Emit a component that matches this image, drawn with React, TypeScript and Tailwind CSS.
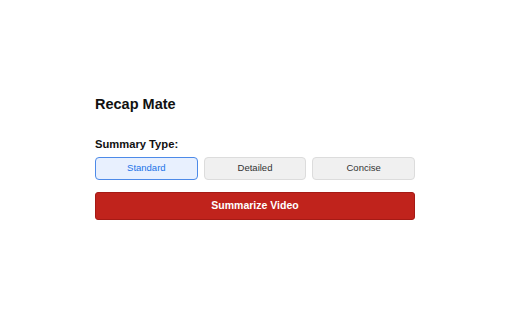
export default function App() {
  const types = ["Standard", "Detailed", "Concise"];
  const active = "Standard";

  return (
    <div className="min-h-[320px] w-[512px] bg-white font-['Liberation_Sans',Arial,sans-serif]">
      <div className="ml-[95px] w-[320px] pt-[95px]">
        <h1 className="text-[14.5px] leading-[18px] font-bold text-[#111]">Recap Mate</h1>

        <div className="mt-[24px] text-[11.2px] leading-[14px] font-bold text-[#111]">Summary Type:</div>

        <div className="mt-[6px] grid grid-cols-3 gap-[6px]">
          {types.map((t) =>
            t === active ? (
              <button
                key={t}
                className="h-[23px] rounded-[4px] border border-[#4d8ae8] bg-[#e8f0fe] text-[9.5px] text-[#1a73e8]"
              >
                {t}
              </button>
            ) : (
              <button
                key={t}
                className="h-[23px] rounded-[4px] border border-[#dcdcdc] bg-[#f0f0f0] text-[9.5px] text-[#333]"
              >
                {t}
              </button>
            )
          )}
        </div>

        <button className="mt-[12px] h-[28px] w-full rounded-[3px] border border-[#a51a15] bg-[#c0231c] text-[10.5px] font-bold text-white">
          Summarize Video
        </button>
      </div>
    </div>
  );
}
